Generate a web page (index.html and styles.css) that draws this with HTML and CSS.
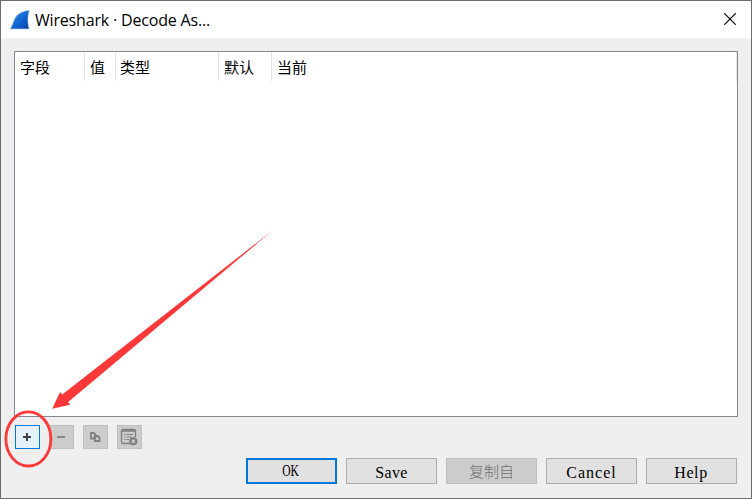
FILE: index.html
```html
<!DOCTYPE html>
<html lang="zh-CN">
<head>
<meta charset="utf-8">
<title>Wireshark · Decode As...</title>
<link rel="stylesheet" href="styles.css">
</head>
<body>
<main class="window">
  <header class="titlebar">
    <svg class="logo" width="20" height="20" viewBox="0 0 20 20">
      <defs><linearGradient id="fin" x1="0" y1="0" x2="1" y2="1"><stop offset="0" stop-color="#3c9cf0"/><stop offset=".5" stop-color="#1268d6"/><stop offset="1" stop-color="#0a3fa8"/></linearGradient></defs>
      <path d="M.3 19C2.200 16 2.800 12.500 4.500 8.900C7 3.900 12 .8 19.500.4C17.800 4.500 17.200 12.500 19.200 19Z" fill="url(#fin)" stroke="#b9cbe0" stroke-width=".7"/>
    </svg>
    <h1 class="title">Wireshark · Decode As...</h1>
    <svg class="close" width="12" height="12" viewBox="0 0 12 12"><path d="M.3.3 11.700 11.700M11.700.3.3 11.700" stroke="#000" stroke-width="1.150"/></svg>
  </header>
  <section class="content">
    <div class="table">
      <div class="head">
        <span class="col field">字段</span><span class="col value">值</span><span class="col type">类型</span><span class="col default">默认</span><span class="col current">当前</span>
      </div>
    </div>
    <div class="tools">
      <button class="tool active"><svg width="25" height="24" viewBox="0 0 25 24"><path d="M8 12h8M12 8v8" stroke="#404040" stroke-width="2"/></svg></button>
      <button class="tool"><svg width="25" height="24" viewBox="0 0 25 24"><path d="M8 12h8" stroke="#858585" stroke-width="2"/></svg></button>
      <button class="tool"><svg width="25" height="24" viewBox="0 0 25 24"><path d="M11 13.500H8V8h3l1.500 1.500V13M11.800 11h3l1.700 1.700V16h-4.700Z" fill="none" stroke="#808080" stroke-width="1.800"/></svg></button>
      <button class="tool"><svg width="25" height="24" viewBox="0 0 25 24"><path d="M13 18.500H6a1.500 1.500 0 0 1-1.500-1.500V6A1.500 1.500 0 0 1 6 4.500H17A1.500 1.500 0 0 1 18.500 6V12M5 6h13" fill="none" stroke="#808080" stroke-width="1.400"/><path d="M7 9.500h1.500M9.500 9.500H16M7 12h1.500M9.500 12H15M7 14.500h1.500M9.500 14.500H12" stroke="#808080" stroke-width="1.200"/><circle cx="16.300" cy="16.300" r="4" fill="#7a7a7a"/><path d="m14.700 14.700 3.200 3.200M17.900 14.700l-3.200 3.200" stroke="#ddd" stroke-width="1.200"/></svg></button>
    </div>
    <footer class="actions">
      <button class="action primary"><span class="condensed">OK</span></button>
      <button class="action save">Save</button>
      <button class="action disabled">复制自</button>
      <button class="action cancel">Cancel</button>
      <button class="action help">Help</button>
    </footer>
  </section>
</main>
<svg class="annotation" width="752" height="499" viewBox="0 0 752 499">
  <path d="M52.200 408.800 60 392 62.200 394.500 273.500 229.700 68.200 402 70.200 404.700Z" fill="#fd3838"/>
  <ellipse cx="28.400" cy="438.900" rx="22.500" ry="27.100" fill="none" stroke="#fd3838" stroke-width="2.800"/>
</svg>
</body>
</html>
```
FILE: styles.css
```css
* { box-sizing: border-box; }
body { margin: 0; background: #efefef; color: #000; font-family: "Noto Sans CJK SC", sans-serif; }
button { padding: 0; margin: 0; }
.window { width: 752px; height: 499px; border: 1px solid #6e6c6e; background: #efefef; }
.titlebar { height: 37px; padding: 0 15px 0 9px; display: flex; align-items: center; background: #fff; }
.title { flex: 1; margin: 0 0 0 5px; font: 400 16px/24px "Open Sans", sans-serif; letter-spacing: -.18px; }
.logo, .close { display: block; }
.close { margin-bottom: 1px; }
.content { padding: 13px 13px 0; }
.table { height: 366px; border: 1px solid #828790; background: #fff; }
.head { display: flex; height: 29px; }
.col { padding-left: 5px; border-right: 1px solid #e5e5e5; font-size: 15px; line-height: 29px; white-space: nowrap; }
.field { width: 70px; }
.value { width: 31px; }
.type { width: 103px; padding-left: 4px; }
.default { width: 53px; }
.current { flex: 1; }
.tools { display: flex; gap: 9px; margin: 8px 0 0 1px; }
.tool { width: 25px; height: 24px; border: 1px solid #bfbfbf; background: #ccc; }
.tool svg { display: block; margin: -1px; }
.tool.active { border-color: #0078d7; background: #e5f1fb; }
.actions { display: flex; justify-content: flex-end; gap: 9px; margin: 9px 1px 0 0; }
.action { width: 91px; height: 26px; border: 1px solid #adadad; background: #e1e1e1; color: #000; font: 16px/24px "Liberation Serif", "Noto Sans CJK SC", serif; padding-top: 2px; }
.primary { border: 2px solid #0078d7; padding: 0 2px 0 0; line-height: 22px; }
.condensed { display: inline-block; transform: scaleX(.72); }
.save { letter-spacing: .3px; }
.cancel { letter-spacing: 1px; }
.help { letter-spacing: .6px; padding-right: 1px; }
.disabled { border-color: #bfbfbf; background: #ccc; color: #707070; font-family: "Noto Sans CJK SC", sans-serif; font-size: 15px; font-weight: 300; padding-top: 0; }
.annotation { position: absolute; left: 0; top: 0; pointer-events: none; }
```
